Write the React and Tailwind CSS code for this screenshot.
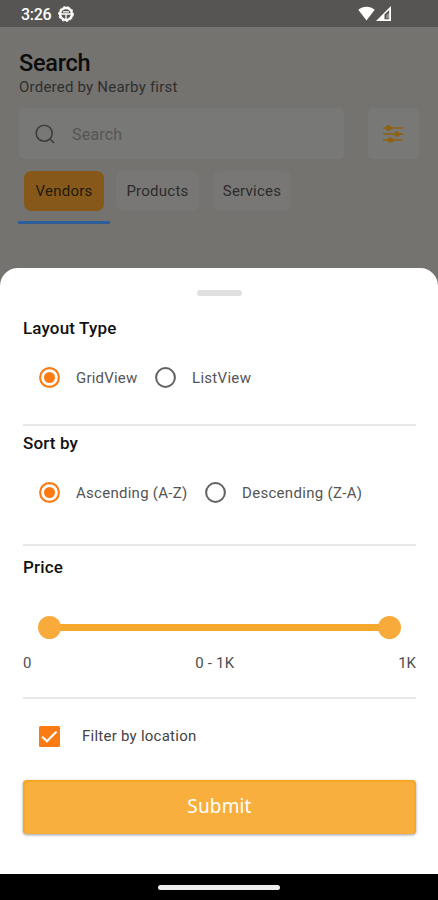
import { useState } from 'react';

const SORT_OPTIONS = [
  { value: 'asc', label: 'Ascending (A-Z)', text: 'w-[112px] tracking-[0.27px]' },
  { value: 'desc', label: 'Descending (Z-A)', text: 'w-[121px] tracking-[0.3px]' },
];

const LAYOUT_OPTIONS = [
  { value: 'grid', label: 'GridView', text: 'w-[62px] tracking-[0.2px]' },
  { value: 'list', label: 'ListView', text: 'w-[62px] tracking-[0.3px]' },
];

const TABS = [
  { label: 'Vendors', box: 'w-[80px]' },
  { label: 'Products', box: 'ml-[12px] w-[83px]' },
  { label: 'Services', box: 'ml-[14px] w-[78px]' },
];

const StatusBar = () => (
  <div className="flex h-[27px] shrink-0 items-center bg-[#565553] pl-[21px] pr-[47px] text-white">
    <span className="pt-[2px] text-[16px] font-medium leading-[25px] tracking-[-0.3px]">3:26</span>
    <svg className="ml-[7px]" width="16" height="16" viewBox="0 0 16 16" fill="none">
      <circle cx="8" cy="8" r="6" stroke="white" strokeWidth="2.4" />
      <circle cx="8" cy="8" r="7.4" stroke="white" strokeWidth="1" strokeDasharray="2.5 2" />
      <path d="M2 8h12M5 5.8h6M8 8v5" stroke="white" strokeWidth="1.3" />
    </svg>
    <svg className="ml-auto" width="17" height="15" viewBox="0 0 17 15">
      <path d="M0.3 3.7C4.8-.3 12.2-.3 16.7 3.7L8.5 14.5z" fill="white" />
    </svg>
    <svg className="ml-[1px]" width="15" height="15" viewBox="0 0 15 15">
      <path d="M0 15L15 0v15z" fill="white" />
      <path d="M8.5 13.2V8.4L13.2 3.9v9.3z" fill="#565553" />
      <path d="M10.3 12.5V9.3L13 6.7v5.8z" fill="#93928f" />
    </svg>
  </div>
);

const RadioGroup = ({ options, value, onChange }) => (
  <div className="flex h-[22px] items-center pl-[16px]">
    {options.map((o, i) => (
      <button
        key={o.value}
        type="button"
        onClick={() => onChange(o.value)}
        className={`flex items-center ${i > 0 ? 'ml-[17px]' : ''}`}
      >
        {value === o.value ? (
          <svg width="21" height="21" viewBox="0 0 21 21">
            <circle cx="10.5" cy="10.5" r="9.4" fill="none" stroke="#fc7a12" strokeWidth="2.1" />
            <circle cx="10.5" cy="10.5" r="5.5" fill="#fc7a12" />
          </svg>
        ) : (
          <svg width="21" height="21" viewBox="0 0 21 21">
            <circle cx="10.5" cy="10.5" r="9.4" fill="none" stroke="#626262" strokeWidth="2" />
          </svg>
        )}
        <span className={`ml-[16px] whitespace-nowrap pt-[2px] text-left text-[15px] leading-[20px] text-[#555] ${o.text}`}>
          {o.label}
        </span>
      </button>
    ))}
  </div>
);

const SectionTitle = ({ children }) => (
  <h2 className="h-[22px] text-[17px] font-medium leading-[22px] tracking-[0.15px] text-[#111]">{children}</h2>
);

const Divider = () => <div className="h-[2px] bg-[#e8e8e8]" />;

const App = () => {
  const [tab, setTab] = useState('Vendors');
  const [layout, setLayout] = useState('grid');
  const [sort, setSort] = useState('asc');
  const [byLocation, setByLocation] = useState(true);

  return (
    <div className="flex h-[900px] w-[438px] flex-col overflow-hidden bg-[#747370] font-[Roboto,sans-serif]">
      <StatusBar />

      <div className="h-[241px] shrink-0 px-[19px] pt-[23px]">
        <h1 className="text-[23.5px] font-medium leading-[27px] tracking-[-0.25px] text-[#0c0c0c]">Search</h1>
        <p className="text-[15px] leading-[20px] tracking-[0.22px] text-[#2f2f2e]">Ordered by Nearby first</p>

        <div className="mt-[11px] flex justify-between">
          <div className="flex h-[51px] w-[325px] items-center rounded-[5px] bg-[#787877] pl-[16px]">
            <svg className="mt-[1px]" width="20" height="20" viewBox="0 0 20 20" fill="none" stroke="#3d3d3c" strokeWidth="1.6">
              <circle cx="9.2" cy="9.2" r="8" />
              <path d="M14.8 14.8L19 19" />
            </svg>
            <span className="ml-[17px] pt-[2px] text-[16px] leading-[20px] tracking-[0.2px] text-[#565655]">Search</span>
          </div>
          <div className="flex h-[51px] w-[51px] items-center justify-center rounded-[5px] bg-[#787877]">
            <svg className="mr-[1px]" width="20" height="18" viewBox="0 0 20 18" fill="#8f6212">
              <path d="M0 3h20M0 9h20M0 15h20" stroke="#8f6212" strokeWidth="1.6" />
              <circle cx="5.5" cy="3" r="2.8" />
              <circle cx="14" cy="9" r="2.8" />
              <circle cx="7.5" cy="15" r="2.8" />
            </svg>
          </div>
        </div>

        <div className="mt-[12px] flex pl-[5px]">
          {TABS.map(t => (
            <button
              key={t.label}
              type="button"
              onClick={() => setTab(t.label)}
              className={`h-[40px] rounded-[7px] pt-[1px] text-[15px] tracking-[0.25px] ${t.box} ${
                tab === t.label ? 'bg-[#86591a] text-[#21190c]' : 'bg-[#787776] text-[#2c2c2b]'
              }`}
            >
              {t.label}
            </button>
          ))}
        </div>
        <div className="-ml-[1px] mt-[10px] h-[2.5px] w-[92px] bg-[#2f5f99]" />
      </div>

      <div className="flex h-[606px] shrink-0 flex-col rounded-t-[18px] bg-white pl-[23px] pr-[22px] pt-[22px]">
        <div className="mx-auto h-[6px] w-[45px] shrink-0 rounded-full bg-[#e0e0e0]" />

        <div className="mt-[21px]">
          <SectionTitle>Layout Type</SectionTitle>
        </div>
        <div className="mt-[27px] mb-[36px]">
          <RadioGroup options={LAYOUT_OPTIONS} value={layout} onChange={setLayout} />
        </div>
        <Divider />

        <div className="mt-[6px]">
          <SectionTitle>Sort by</SectionTitle>
        </div>
        <div className="mt-[27px] mb-[41px]">
          <RadioGroup options={SORT_OPTIONS} value={sort} onChange={setSort} />
        </div>
        <Divider />

        <div className="mt-[10px]">
          <SectionTitle>Price</SectionTitle>
        </div>
        <div className="mt-[38px] flex h-[23px] items-center px-[15px]">
          <div className="size-[23px] rounded-full bg-[#f8ab3b]" />
          <div className="-mx-[1px] h-[7px] flex-1 bg-[#f5a82c]" />
          <div className="size-[23px] rounded-full bg-[#f8ab3b]" />
        </div>
        <div className="mt-[15px] flex h-[19px] justify-between text-[15px] leading-[19px] text-[#4f4f4f]">
          <span>0</span>
          <span className="tracking-[0.2px]">0 - 1K</span>
          <span>1K</span>
        </div>
        <div className="mt-[24px]">
          <Divider />
        </div>

        <button
          type="button"
          onClick={() => setByLocation(v => !v)}
          className="mt-[26px] flex h-[22px] items-center pl-[16px]"
        >
          <svg width="21" height="21" viewBox="0 0 21 21">
            {byLocation ? (
              <>
                <rect width="21" height="21" rx="1.5" fill="#fc7a12" />
                <path d="M3.2 10.7L8 15.3L17.5 5.5" fill="none" stroke="white" strokeWidth="2.2" />
              </>
            ) : (
              <rect x="1" y="1" width="19" height="19" rx="1.5" fill="none" stroke="#626262" strokeWidth="2" />
            )}
          </svg>
          <span className="ml-[22px] text-[15px] leading-[22px] tracking-[0.25px] text-[#444]">Filter by location</span>
        </button>

        <button
          type="button"
          className="mt-[33px] h-[54px] shrink-0 rounded-[4px] border-x-2 border-t-2 border-[#f6a724] bg-[#f8af3d] pb-[4px] font-['Noto_Sans',sans-serif] text-[19px] tracking-[0.15px] text-white shadow-[0_1px_3px_rgba(0,0,0,0.4)]"
        >
          Submit
        </button>
      </div>

      <div className="flex h-[26px] shrink-0 items-center justify-center bg-black">
        <div className="h-[5px] w-[122px] rounded-full bg-[#eee]" />
      </div>
    </div>
  );
};

export default App;
